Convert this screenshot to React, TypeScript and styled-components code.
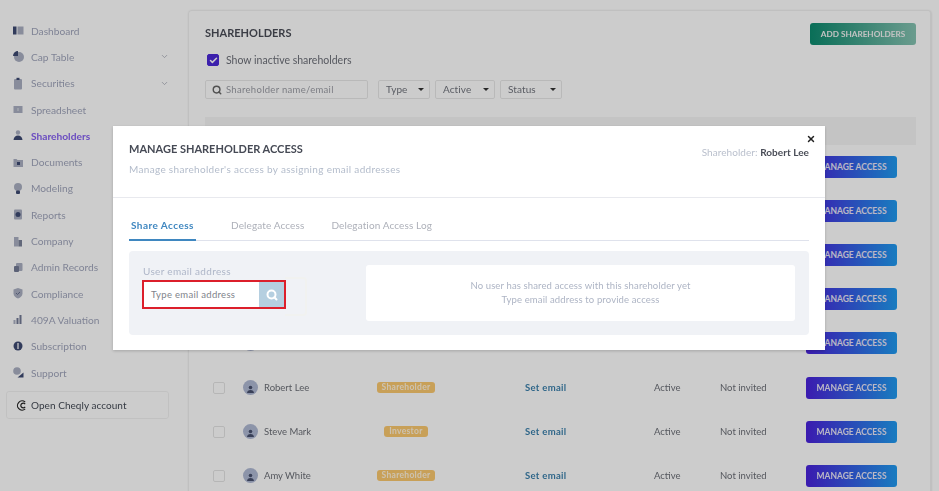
import React from "react";
import styled, { createGlobalStyle } from "styled-components";
import { ChevronDown, Search, X, Check } from "lucide-react";

const Global = createGlobalStyle`
  html, body { margin: 0; padding: 0; background: #fff; }
  body { font-family: Lato, "Open Sans", sans-serif; overflow: hidden; }
  * { box-sizing: border-box; }
`;

const Page = styled.div`
  position: relative;
  width: 939px;
  height: 491px;
  overflow: hidden;
  display: flex;
  filter: blur(0.45px);
`;

const Sidebar = styled.nav`
  width: 188px;
  flex: none;
  padding: 17.5px 0 0 6px;
`;

const NavItem = styled.div<{ $active?: boolean }>`
  height: 26.3px;
  display: flex;
  align-items: center;
  padding-left: 6px;
  width: 163px;
  font-size: 10.2px;
  color: ${(p) => (p.$active ? "#855ff0" : "#a0a5bb")};
  font-weight: ${(p) => (p.$active ? 700 : 400)};
`;

const NavIcon = styled.span`
  width: 13px;
  height: 13px;
  margin-right: 6px;
  display: flex;
  flex: none;
`;

const NavLabel = styled.span`
  flex: 1;
`;

const Cheqly = styled.div`
  width: 163px;
  height: 28px;
  margin-top: 5.5px;
  border: 1px solid #f2f2f2;
  border-radius: 3px;
  display: flex;
  align-items: center;
  padding-left: 9px;
  gap: 4px;
  font-size: 10px;
  letter-spacing: 0.05px;
  color: #444a55;
`;

const Panel = styled.main`
  width: 744px;
  height: 500px;
  margin-top: 10px;
  flex: none;
  border: 1px solid #f0f0f0;
  border-right-width: 2px;
  border-radius: 4px;
  padding: 0 14px 0 16px;
  box-shadow: 0 0 2px rgba(0, 0, 0, 0.08);
`;

const TitleRow = styled.div`
  height: 46px;
  margin-bottom: -8px;
  display: flex;
  align-items: flex-start;
  justify-content: space-between;
  padding-top: 12px;
`;

const Title = styled.h1`
  margin: 3px 0 0;
  font-size: 11px;
  font-weight: 700;
  color: #4a4d57;
`;

const AddButton = styled.button`
  width: 106px;
  height: 22px;
  border: 0;
  border-radius: 3px;
  background: linear-gradient(90deg, #0c8a6e, #86c3b2);
  color: #f3f3f3;
  font: 700 8.2px Lato, sans-serif;
  white-space: nowrap;
  padding: 0;
`;

const ToggleRow = styled.label`
  display: flex;
  align-items: center;
  gap: 7px;
  height: 22px;
  padding-left: 2px;
  font-size: 10.5px;
  color: #6c6f78;
`;

const CheckBox = styled.span<{ $checked?: boolean }>`
  width: 12px;
  height: 12px;
  border-radius: 2px;
  display: flex;
  align-items: center;
  justify-content: center;
  flex: none;
  background: ${(p) => (p.$checked ? "#4b28d8" : "transparent")};
  border: 1px solid ${(p) => (p.$checked ? "#4b28d8" : "#e4e4e4")};
  color: #fff;
`;

const Filters = styled.div`
  display: flex;
  gap: 5px;
  margin-top: 9px;
  height: 19px;
`;

const SearchBox = styled.div`
  width: 163px;
  margin-right: 5px;
  display: flex;
  align-items: center;
  gap: 4px;
  padding-left: 6px;
  border: 1px solid #e8e8e8;
  border-radius: 2px;
  font-size: 9.5px;
  letter-spacing: 0.3px;
  color: #9a9ca4;
`;

const Select = styled.div<{ $w: number }>`
  width: ${(p) => p.$w}px;
  display: flex;
  align-items: center;
  justify-content: space-between;
  padding: 0 5px 2px 7px;
  border: 1px solid #e8e8e8;
  border-radius: 2px;
  font-size: 10px;
  letter-spacing: 0.1px;
  color: #70737c;
  &::after {
    content: "";
    margin-top: 2px;
    border: 3px solid transparent;
    border-top: 3.5px solid #333;
    border-bottom: 0;
  }
`;

const TableHead = styled.div`
  height: 28px;
  margin-top: 18px;
  background: #f6f6f6;
  width: 711px;
`;

const Row = styled.div`
  height: 44.2px;
  width: 711px;
  display: grid;
  grid-template-columns: 31px 117px 165px 129px 66px 86px 91px;
  align-items: center;
  padding-left: 7px;
  padding-bottom: 1px;
  font-size: 9.5px;
  color: #6b6e76;
`;

const RowCheck = styled(CheckBox)`
  margin-left: 1px;
`;

const Person = styled.div`
  display: flex;
  align-items: center;
  gap: 6px;
`;

const Avatar = styled.span`
  width: 15px;
  height: 15px;
  border-radius: 50%;
  background: #b0b9d4;
  display: flex;
  align-items: flex-end;
  justify-content: center;
  overflow: hidden;
`;

const BadgeCell = styled.div`
  display: flex;
  justify-content: center;
  padding-right: 73px;
`;

const Badge = styled.span`
  background: #fbc86e;
  color: #fff3dc;
  border-radius: 3px;
  height: 11px;
  line-height: 11px;
  padding: 0 5px;
  font-size: 8.5px;
  font-weight: 700;
  letter-spacing: 0.3px;
  white-space: nowrap;
`;

const SetEmail = styled.a`
  color: #3a7fab;
  font-weight: 700;
  font-size: 9.5px;
  letter-spacing: 0.3px;
`;

const ManageButton = styled.button`
  grid-column: 7;
  width: 91px;
  height: 22px;
  border: 0;
  border-radius: 3px;
  background: linear-gradient(90deg, #4a22dc, #1f9bf0);
  color: #e9e6f7;
  font: 700 8.5px Lato, sans-serif;
  white-space: nowrap;
  padding: 0;
`;

const Backdrop = styled.div`
  position: absolute;
  inset: 0;
  background: rgba(0, 0, 0, 0.2);
`;

const Modal = styled.section`
  position: absolute;
  left: 113px;
  top: 126px;
  width: 712px;
  height: 224px;
  background: #fff;
  box-shadow: 0 1px 3px rgba(0, 0, 0, 0.2);
  color: #444;
`;

const ModalHeader = styled.header`
  position: relative;
  height: 72px;
  padding: 16px 16px 0;
  border-bottom: 1px solid #e8e9ee;
  display: flex;
  justify-content: space-between;
`;

const ModalTitle = styled.h2`
  margin: 0;
  font-size: 11px;
  font-weight: 700;
  color: #464a55;
`;

const ModalSub = styled.p`
  margin: 8px 0 0;
  font-size: 10px;
  letter-spacing: 0.32px;
  color: #b3bccb;
`;

const Holder = styled.div`
  margin-top: 4px;
  font-size: 10px;
  letter-spacing: 0.05px;
  color: #b9bfcc;
  b {
    color: #4a4d57;
  }
`;

const CloseIcon = styled.span`
  position: absolute;
  right: 9px;
  top: 8px;
  display: flex;
  color: #222;
`;

const Tabs = styled.div`
  margin: 14px 16px 0;
  height: 29px;
  display: flex;
  align-items: flex-start;
  border-bottom: 1px solid #dfe2ec;
  padding-top: 7px;
`;

const Tab = styled.div<{ $active?: boolean }>`
  height: 22px;
  padding: 0 2px;
  font-size: 10px;
  letter-spacing: ${(p) => (p.$active ? "0.45px" : "0.12px")};
  font-weight: ${(p) => (p.$active ? 700 : 400)};
  color: ${(p) => (p.$active ? "#3f87c0" : "#adb0b9")};
  border-bottom: ${(p) => (p.$active ? "2px solid #3f87c0" : "0")};
  margin-right: 23px;
  &:first-child {
    width: 67px;
    margin-right: 33px;
    white-space: nowrap;
  }
`;

const ShareCard = styled.div`
  margin: 10px 16px 0;
  height: 84px;
  border-radius: 4px;
  background: #f0f2f6;
  display: flex;
  padding: 14px 14px 14px 13px;
`;

const EmailCol = styled.div`
  width: 224px;
  flex: none;
`;

const FieldLabel = styled.div`
  font-size: 10px;
  letter-spacing: 0.32px;
  color: #aeb6c8;
  line-height: 11px;
  margin: 1px 0 0 1px;
`;

const EmailField = styled.div`
  position: relative;
  margin-top: 3px;
  width: 144px;
  height: 29px;
  border: 2px solid #dc1f2b;
  background: #fff;
  display: flex;
  justify-content: space-between;
  align-items: stretch;
  font-size: 9.5px;
  letter-spacing: 0.3px;
  color: #80838b;
  &::after {
    content: "";
    position: absolute;
    left: 141px;
    top: -5px;
    width: 20px;
    height: 35px;
    border: 2px solid #f1f2f0;
    border-left: 0;
    border-radius: 0 4px 4px 0;
  }
`;

const EmailText = styled.span`
  align-self: center;
  padding-left: 7px;
`;

const SearchBtn = styled.span`
  width: 25px;
  background: #b5cfe0;
  color: #fff;
  display: flex;
  align-items: center;
  justify-content: center;
`;

const EmptyBox = styled.div`
  flex: 1;
  background: #fff;
  border-radius: 3px;
  display: flex;
  flex-direction: column;
  align-items: center;
  justify-content: center;
  gap: 2px;
  font-size: 9.5px;
  letter-spacing: 0.13px;
  color: #adb4c4;
  line-height: 12px;
`;

const Ico = ({ children }: { children: React.ReactNode }) => (
  <NavIcon>
    <svg width="13" height="13" viewBox="0 0 13 13">
      {children}
    </svg>
  </NavIcon>
);

const D = "#3e4a72";
const L = "#aab0c2";

const nav: { label: string; chevron?: boolean; active?: boolean; icon: React.ReactNode }[] = [
  { label: "Dashboard", icon: (<><rect x="1" y="2.5" width="3.5" height="8" fill={D} /><rect x="5.5" y="2.5" width="6" height="8" fill={L} /></>) },
  { label: "Cap Table", chevron: true, icon: (<><circle cx="7" cy="7" r="5" fill={L} /><path d="M6 1v5H1a5 5 0 0 1 5-5z" fill={D} /></>) },
  { label: "Securities", chevron: true, icon: (<><rect x="2" y="2" width="8" height="10.5" rx="1" fill={L} /><rect x="4.5" y="0.8" width="3" height="2.2" fill={D} /></>) },
  { label: "Spreadsheet", icon: (<><rect x="1.5" y="3" width="9" height="7" fill={L} /><rect x="5" y="5" width="2" height="3" fill="#c4c8d4" /></>) },
  { label: "Shareholders", active: true, icon: (<><circle cx="6" cy="3.5" r="2.2" fill={L} /><path d="M1.5 11c.3-3 2-4.5 4.5-4.5s4.2 1.5 4.5 4.5z" fill={D} /></>) },
  { label: "Documents", icon: (<><path d="M1.5 3h3l1 1h5.5v7h-9.500z" fill={L} /><rect x="5" y="6" width="3" height="3" fill={D} /></>) },
  { label: "Modeling", icon: (<><circle cx="6" cy="5" r="4" fill={L} /><rect x="4" y="8.500" width="4" height="3.500" rx="1" fill={D} /></>) },
  { label: "Reports", icon: (<><rect x="2" y="1.500" width="8" height="10" rx="1" fill={L} /><circle cx="6" cy="6.500" r="2.500" fill={D} /></>) },
  { label: "Company", icon: (<><rect x="2" y="2" width="4.500" height="9.500" fill={L} /><rect x="6.500" y="5" width="3.500" height="6.500" fill="#7b8299" /></>) },
  { label: "Admin Records", icon: (<><rect x="4" y="2" width="6.500" height="8" rx="1" fill={L} /><rect x="2" y="5" width="5" height="6" rx="1" fill="#737b95" /></>) },
  { label: "Compliance", icon: (<><path d="M6 1l4.500 1.500v4c0 2.500-2 4-4.500 5-2.500-1-4.500-2.500-4.500-5v-4z" fill={L} /><path d="M4 6l1.500 1.500L8 5" stroke="#666f8c" fill="none" /></>) },
  { label: "409A Valuation", icon: (<><rect x="1.500" y="7" width="2" height="4" fill={L} /><rect x="4.500" y="5" width="2" height="6" fill="#737b95" /><rect x="7.500" y="2" width="2" height="9" fill="#737b95" /></>) },
  { label: "Subscription", icon: (<><circle cx="6" cy="6" r="4.500" fill={D} /><rect x="5.200" y="3" width="1.600" height="6" fill="#d5d8e0" /></>) },
  { label: "Support", icon: (<><circle cx="5" cy="5" r="3.800" fill={L} /><path d="M11.500 6.500v5h-6z" fill={D} /></>) },
];

// the first five rows sit behind the dialog, only their buttons show
const rows: { id: number; name?: string; type?: string }[] = [
  { id: 1 },
  { id: 2 },
  { id: 3 },
  { id: 4 },
  { id: 5 },
  { id: 6, name: "Robert Lee", type: "Shareholder" },
  { id: 7, name: "Steve Mark", type: "Investor" },
  { id: 8, name: "Amy White", type: "Shareholder" },
];

export default function App() {
  return (
    <>
      <Global />
      <Page>
        <Sidebar>
          {nav.map((n) => (
            <NavItem key={n.label} $active={n.active}>
              <Ico>{n.icon}</Ico>
              <NavLabel>{n.label}</NavLabel>
              {n.chevron && <ChevronDown size={9} color="#a0a4b0" />}
            </NavItem>
          ))}
          <Cheqly>
            <svg width="11" height="11" viewBox="0 0 12 12" fill="none" stroke="#222" strokeWidth="1.300">
              <path d="M10 2.300A5 5 0 1 0 10 9.700" />
              <path d="M10 4.500A2.600 2.600 0 1 0 10 7.500" />
            </svg>
            Open Cheqly account
          </Cheqly>
        </Sidebar>
        <Panel>
          <TitleRow>
            <Title>SHAREHOLDERS</Title>
            <AddButton>ADD SHAREHOLDERS</AddButton>
          </TitleRow>
          <ToggleRow>
            <CheckBox $checked>
              <Check size={9} strokeWidth={4} />
            </CheckBox>
            Show inactive shareholders
          </ToggleRow>
          <Filters>
            <SearchBox>
              <Search size={10} strokeWidth={3.500} color="#666" />
              Shareholder name/email
            </SearchBox>
            <Select $w={52}>Type</Select>
            <Select $w={60}>Active</Select>
            <Select $w={62}>Status</Select>
          </Filters>
          <TableHead />
          {rows.map((r) => (
            <Row key={r.id}>
              <RowCheck />
              <Person>
                <Avatar>
                  <svg width="9" height="11" viewBox="0 0 9 11">
                    <circle cx="4.500" cy="3.500" r="1.800" fill="#48506e" />
                    <path d="M1 9c.2-2 1.500-3 3.500-3S7.800 7 8 9z" fill="#48506e" />
                  </svg>
                </Avatar>
                {r.name}
              </Person>
              {r.name && (
                <>
                  <BadgeCell>
                    <Badge>{r.type}</Badge>
                  </BadgeCell>
                  <SetEmail>Set email</SetEmail>
                  <span>Active</span>
                  <span>Not invited</span>
                </>
              )}
              <ManageButton>MANAGE ACCESS</ManageButton>
            </Row>
          ))}
        </Panel>
        <Backdrop />
        <Modal>
          <ModalHeader>
            <div>
              <ModalTitle>MANAGE SHAREHOLDER ACCESS</ModalTitle>
              <ModalSub>Manage shareholder's access by assigning email addresses</ModalSub>
            </div>
            <Holder>
              Shareholder: <b>Robert Lee</b>
            </Holder>
            <CloseIcon>
              <X size={10} strokeWidth={3.500} />
            </CloseIcon>
          </ModalHeader>
          <Tabs>
            <Tab $active>Share Access</Tab>
            <Tab>Delegate Access</Tab>
            <Tab>Delegation Access Log</Tab>
          </Tabs>
          <ShareCard>
            <EmailCol>
              <FieldLabel>User email address</FieldLabel>
              <EmailField>
                <EmailText>Type email address</EmailText>
                <SearchBtn>
                  <Search size={12} strokeWidth={4} />
                </SearchBtn>
              </EmailField>
            </EmailCol>
            <EmptyBox>
              <span>No user has shared access with this shareholder yet</span>
              <span>Type email address to provide access</span>
            </EmptyBox>
          </ShareCard>
        </Modal>
      </Page>
    </>
  );
}
